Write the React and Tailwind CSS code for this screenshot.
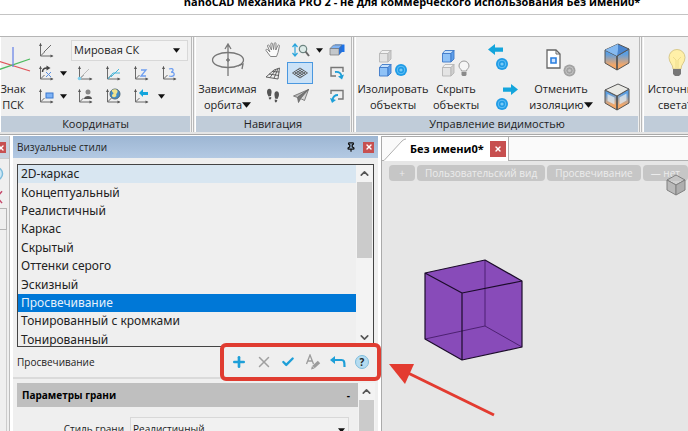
import { useState } from 'react'
import clsx from 'clsx'
import { ChevronUp, ChevronDown, Plus, X, Check, Pin } from 'lucide-react'

const STYLES = [
  '2D-каркас',
  'Концептуальный',
  'Реалистичный',
  'Каркас',
  'Скрытый',
  'Оттенки серого',
  'Эскизный',
  'Просвечивание',
  'Тонированный с кромками',
  'Тонированный',
]

function Caret({ className }) {
  return (
    <svg viewBox="0 0 8 5" className={clsx('h-[5px] w-[7px] shrink-0', className)} fill="#111">
      <path d="M0 0h8L4 5z" />
    </svg>
  )
}

/* Ribbon parts */

function RibbonGroup({ title, className, children }) {
  return (
    <section className={clsx('flex flex-col shrink-0 border-l border-white bg-[#efefef]', className)}>
      <div className="flex h-[79px] items-start">{children}</div>
      <h2 className="h-4 bg-[#c0ccd9] text-center text-[11px] leading-4 text-[#222]">{title}</h2>
    </section>
  )
}

function Divider() {
  return <div className="mx-px w-[3px] shrink-0 border-x border-[#b9b9b9] bg-[#f6f6f6]" />
}

function BigButton({ lines, icon, menu, className }) {
  return (
    <button className={clsx('flex shrink-0 flex-col items-center text-[11px] leading-4 whitespace-nowrap text-[#222]', className)}>
      <span className="flex h-11 items-end pb-1">{icon}</span>
      <span>{lines[0]}</span>
      <span className="flex items-center">
        {lines[1]}
        {menu && <svg viewBox="0 0 10 6" className="h-[6px] w-[9px]" fill="#111"><path d="M0 0h10L5 6z" /></svg>}
      </span>
    </button>
  )
}

function IconButton({ label, className, children }) {
  return (
    <button aria-label={label} className={clsx('flex h-[22px] shrink-0 items-center justify-center', className)}>
      {children}
    </button>
  )
}

function AxisIcon({ children }) {
  return (
    <svg viewBox="0 0 16 16" className="size-4" fill="none">
      <path d="M2.500 1.500V14h12M2.500 14l4-4" stroke="#6b6b6b" />
      <path d="M1 4l1.500-3L4 4zM12.500 12.500l3 1.500-3 1.500z" fill="#555" />
      {children}
    </svg>
  )
}

function UcsIcon() {
  return (
    <svg viewBox="0 0 36 26" className="h-[26px] w-9" fill="none" strokeWidth="1.300">
      <path d="M0 13l35 11" stroke="#e0565b" />
      <path d="M35 12L0 24" stroke="#4cba5e" />
      <path d="M18 0v20" stroke="#6d87e8" />
    </svg>
  )
}

function OrbitIcon() {
  return (
    <svg viewBox="0 0 34 34" className="h-[34px] w-[34px]" fill="none" stroke="#777" strokeWidth="1.300">
      <ellipse cx="17" cy="17" rx="15.500" ry="7.500" />
      <path d="M17 2v31M14 6l3-5 3 5" />
      <path d="M27 23l5-2-1 5M15 17h4M17 15v4" />
    </svg>
  )
}

function HandIcon() {
  return (
    <svg viewBox="0 0 16 16" className="size-4" fill="#fafafa" stroke="#777" strokeWidth=".9" strokeLinejoin="round">
      <path d="M5.500 14.500L1 8.500c-.5-1 .8-1.700 1.500-1L5 10 2.500 4c-.2-1.200 1.300-1.500 1.700-.5L6.500 8 5.800 2c0-1.300 1.600-1.300 1.800 0l1 5.500.7-6c.2-1.200 1.700-1 1.700.2L10.800 8l2-4.500c.5-1 1.900-.5 1.600.6L13 10.500l-1.500 4z" />
    </svg>
  )
}

function ZoomIcon() {
  return (
    <svg viewBox="0 0 18 14" className="h-[14px] w-[18px]" fill="none">
      <path d="M3 2v10M.5 4L3 1l2.500 3M.5 10L3 13l2.500-3" stroke="#2aa5dc" strokeWidth="1.200" />
      <circle cx="11" cy="6" r="3.700" fill="#dcebe8" stroke="#6d8481" strokeWidth="1.200" />
      <path d="M13.500 8.500L17 13" stroke="#666" strokeWidth="2" />
    </svg>
  )
}

function ViewCubeIcon() {
  return (
    <svg viewBox="0 0 16 14" className="h-[14px] w-4">
      <path d="M6 1.500h9.500V9H6z" fill="#1c73e8" />
      <path d="M1 5.500h9V12H1z" fill="#c3c7cb" stroke="#777" strokeWidth=".7" />
      <path d="M1 5.500L4.500 2H13l-3 3.500z" fill="#7fb3f5" stroke="#777" strokeWidth=".7" />
      <path d="M10 5.500L13 2v7l-3 3z" fill="#2a6fd0" />
    </svg>
  )
}

function PerspectiveIcon() {
  return (
    <svg viewBox="0 0 16 14" className="h-[14px] w-4" fill="none" stroke="#555" strokeWidth=".9">
      <path d="M1 11l12 2 1.500-11L9 4zM4 8l10 1.500M7 5.500l7.500.500M5 11.500L11 3.500M9 12.300l4-9.800" />
    </svg>
  )
}

function GridIcon() {
  return (
    <svg viewBox="0 0 16 12" className="h-3 w-4" fill="none" stroke="#555" strokeWidth=".9">
      <path d="M8 1l7.500 5L8 11 .5 6zM6.100 2.300l7.500 5M4.200 3.500l7.500 5M2.400 4.800l7.500 5M9.900 2.300l-7.500 5M11.800 3.500l-7.500 5M13.600 4.800l-7.500 5" />
    </svg>
  )
}

function StepsIcon() {
  return (
    <svg viewBox="0 0 14 16" className="h-4 w-[14px]" fill="#555">
      <path d="M1 4c0-4 4-4 4.500-1 .3 2-.5 3-.5 5L2.500 8.500C2 7 1 6 1 4zM2.700 9.500L5.200 9c.6 3-2.200 3.500-2.500.5z" />
      <path d="M13 6.500c0-4-4-4-4.500-1-.3 2 .5 3 .5 5l2.500.5c.5-1.500 1.500-2.500 1.500-4.500zM11.300 12l-2.500-.5c-.6 3.500 2.200 4 2.500.5z" />
    </svg>
  )
}

function PlaneIcon() {
  return (
    <svg viewBox="0 0 16 14" className="h-[14px] w-4" stroke="#666" strokeWidth=".8" strokeLinejoin="round">
      <path d="M15.500.5L.5 7l4 1.500z" fill="#bbb" />
      <path d="M15.500.5L4.500 8.500l1 5 2-3.500z" fill="#777" />
      <path d="M15.500.5l-8 9 4 2z" fill="#d6d6d6" />
    </svg>
  )
}

function ViewArrowIcon({ flip }) {
  return (
    <svg viewBox="0 0 16 14" className="h-[14px] w-4" fill="none">
      <path d={flip ? 'M2 5V1.500h12V10H9' : 'M7 10H2V1.500h12V6'} stroke="#777" strokeWidth="1.400" />
      <path d={flip ? 'M9 6c-3 0-5 1.500-5.500 5' : 'M6 6c4-.5 6 1.500 6.500 4'} stroke="#1e9fd8" strokeWidth="1.800" />
      <path d={flip ? 'M1 9l2 5 4-3z' : 'M9 10.500l4 3 2-5z'} fill="#1e9fd8" />
    </svg>
  )
}

function SmallCube({ x = 0, y = 0, blue }) {
  const stroke = blue ? '#3c78c8' : '#b5b5b5'
  return (
    <g transform={`translate(${x} ${y})`} stroke={stroke} strokeWidth=".9" strokeLinejoin="round">
      <path d="M.5 3.500h8.500v8.500H.5z" fill={blue ? '#8fc2f7' : '#e4e4e4'} />
      <path d="M.5 3.500L3 .5h9L9 3.500z" fill={blue ? '#c5e0fb' : '#f1f1f1'} />
      <path d="M9 3.500l3-3V9l-3 3z" fill={blue ? '#5e9fea' : '#cfcfcf'} />
    </g>
  )
}

function Dot({ cx, cy, gray }) {
  return (
    <g fill="none">
      <circle cx={cx} cy={cy} r="6" fill={gray ? '#a2a2a2' : '#1e9be6'} />
      <circle cx={cx} cy={cy} r="3.800" stroke={gray ? '#c5c5c5' : '#66c1f5'} />
      <circle cx={cx} cy={cy} r="1.600" fill={gray ? '#c5c5c5' : '#7accf7'} />
    </g>
  )
}

function IsolateIcon() {
  return (
    <svg viewBox="0 0 30 28" className="h-7 w-[30px]">
      <SmallCube x={1} y={1} />
      <SmallCube x={1} y={15} blue />
      <Dot cx={23} cy={21} />
    </svg>
  )
}

function HideIcon() {
  return (
    <svg viewBox="0 0 30 28" className="h-7 w-[30px]">
      <SmallCube x={1} y={1} blue />
      <SmallCube x={1} y={15} />
      <path d="M20.500 22c0-2-2.500-2.500-2.500-5a5 5 0 0 1 10 0c0 2.500-2.500 3-2.500 5z" fill="#f5f5f5" stroke="#999" />
      <path d="M20.500 23h5v3l-1 1h-3l-1-1z" fill="#8a8a8a" />
    </svg>
  )
}

function UndoIsolateIcon() {
  return (
    <svg viewBox="0 0 30 28" className="h-7 w-[30px]">
      <path d="M1 1h9l4 4v14H1z" fill="#fff" stroke="#666" strokeWidth="1.300" />
      <path d="M10 1v4h4" fill="none" stroke="#666" />
      <path d="M5 9h5v5H5z" fill="#cfe4ff" stroke="#2a7fe0" strokeWidth="1.600" />
      <Dot cx={23.500} cy={21.500} gray />
    </svg>
  )
}

function ShiftIcon({ right }) {
  return (
    <svg viewBox="0 0 30 28" className="h-7 w-[30px]">
      <path d={right ? 'M15 4h8V0l7 6.500L23 13V9h-8z' : 'M15 4H7V0L0 6.500 7 13V9h8z'} fill="#14a5dc" transform="translate(0 1) scale(1 .85)" />
      <Dot cx={14} cy={21} />
    </svg>
  )
}

function BoxIcon({ open }) {
  return (
    <svg viewBox="0 0 26 28" className="h-7 w-[26px]" strokeLinejoin="round">
      <defs>
        <linearGradient id={open ? 'boxOpen' : 'boxSolid'} gradientUnits="userSpaceOnUse" x1="0" y1="6" x2="0" y2="26">
          <stop offset=".25" stopColor="#5c9fe2" />
          <stop offset=".8" stopColor="#f3a768" />
        </linearGradient>
      </defs>
      <path d="M1 7l12 6v14L1 20zM25 6L13 13v14l12-7z" fill={open ? 'url(#boxOpen)' : 'url(#boxSolid)'} stroke="#555" />
      <path d="M1 7l13-6 11 5-12 7z" fill={open ? '#e9e9e5' : '#4a86d0'} stroke="#555" />
      {open
        ? <path d="M3.500 11l7 3.500v7l-7-3.500zM22.500 10.500l-7 4v7l7-4z" fill="#dfe7ed" opacity=".8" />
        : <path d="M14 1v6l-1 6L1 7z" fill="#86baf0" />}
      <path d="M13 13v14" stroke="#555" />
    </svg>
  )
}

function BulbIcon() {
  return (
    <svg viewBox="0 0 18 28" className="h-7 w-[18px]">
      <path d="M5 20c0-5-4-6-4-11.500a8 8 0 0 1 16 0C17 14 13 15 13 20z" fill="#fff0a8" stroke="#d9c98a" />
      <path d="M5 8l3 3v8M13 8l-3 3v8" fill="none" stroke="#eedc8c" />
      <path d="M5 20h8v5l-2 2H7l-2-2z" fill="#777" />
    </svg>
  )
}

function Ribbon() {
  return (
    <div className="flex overflow-hidden border-t border-[#b5b5b5] bg-[#efefef]">
      <RibbonGroup title="Координаты" className="w-[190px]">
        <BigButton className="-ml-3 w-12" lines={['Знак', 'ПСК']} icon={<span className="mb-1"><UcsIcon /></span>} />
        <div className="flex flex-col gap-px pt-[2px]">
          <div className="flex items-center">
            <IconButton label="ПСК" className="w-[18px]"><AxisIcon><path d="M6 10l7-7" stroke="#6b6b6b" /></AxisIcon></IconButton>
            <div className="relative ml-4 flex">
              <select aria-label="Система координат" defaultValue="world" className="h-[21px] w-[117px] appearance-none border border-[#d8d8d8] bg-[#f3f3f3] pl-[2px] text-[11px] leading-4 text-[#222]">
                <option value="world">Мировая СК</option>
              </select>
              <Caret className="pointer-events-none absolute right-2 top-2" />
            </div>
          </div>
          <div className="flex items-center">
            <IconButton label="Повернуть" className="w-[18px]">
              <AxisIcon>
                <path d="M4.500 7c0-3 2-4 4.500-4" stroke="#444" strokeWidth="1.500" />
                <path d="M8.500 .5l4 2.500-4 2.500z" fill="#444" />
                <path d="M8 7l5 5M13 7l-5 5" stroke="#5a8fe0" />
              </AxisIcon>
            </IconButton>
            <IconButton label="Меню поворота" className="w-4"><Caret /></IconButton>
            <IconButton label="Начало" className="w-7"><AxisIcon><path d="M5 11l7-7" stroke="#bbb" /><circle cx="2.500" cy="13.500" r="1.800" fill="#7fd0ee" /></AxisIcon></IconButton>
            <IconButton label="Плоскость" className="w-7"><AxisIcon><path d="M3 14l5-6h7M6 12l8-8" stroke="#45b5da" /></AxisIcon></IconButton>
            <IconButton label="Ось Z" className="w-7"><AxisIcon><path d="M8 5h5l-5 6h5" stroke="#6f9ff0" strokeWidth="1.300" /></AxisIcon></IconButton>
            <IconButton label="Три точки" className="w-7"><AxisIcon><path d="M8 4c5-2 5 3 2 3 5 0 4 6-2 4" stroke="#6f9ff0" strokeWidth="1.300" /></AxisIcon></IconButton>
          </div>
          <div className="flex items-center">
            <IconButton label="Вид" className="w-[18px]"><AxisIcon><rect x="8" y="5" width="7" height="5" fill="#7fb3f5" stroke="#3b78cf" /></AxisIcon></IconButton>
            <IconButton label="Меню вида" className="w-4"><Caret /></IconButton>
            <IconButton label="Объект" className="w-7">
              <AxisIcon><path d="M7 11c0-4 8-4 8 0z" fill="#555" /><circle cx="11" cy="4" r="2.500" fill="#888" /></AxisIcon>
            </IconButton>
            <IconButton label="Мировая" className="w-7">
              <AxisIcon>
                <circle cx="10" cy="6" r="5" fill="#3f8cc8" stroke="#536a77" />
                <path d="M7 2c4-2 7 1 5 3s1 3-2 4-4-2-2-3-2-2-1-4z" fill="#efe28d" />
              </AxisIcon>
            </IconButton>
            <IconButton label="Предыдущая" className="w-7"><AxisIcon><path d="M6 5l4-4v3h5v3h-5v2z" fill="#14a5dc" /></AxisIcon></IconButton>
            <IconButton label="Меню истории" className="w-3"><Caret /></IconButton>
          </div>
        </div>
      </RibbonGroup>
      <Divider />
      <RibbonGroup title="Навигация" className="w-[155px]">
        <BigButton className="w-[63px]" lines={['Зависимая', 'орбита']} menu icon={<OrbitIcon />} />
        <div className="flex flex-col gap-px pt-[2px]">
          <div className="flex">
            <IconButton label="Панорама" className="w-7"><HandIcon /></IconButton>
            <IconButton label="Масштаб" className="w-7"><ZoomIcon /></IconButton>
            <IconButton label="Меню масштаба" className="w-2"><Caret /></IconButton>
            <IconButton label="Видовой куб" className="w-7"><ViewCubeIcon /></IconButton>
          </div>
          <div className="flex">
            <IconButton label="Перспектива" className="w-7"><PerspectiveIcon /></IconButton>
            <IconButton label="Параллельная проекция" className="mr-[10px] w-[26px] border border-[#4a98e0] bg-[#cbe2f7]"><GridIcon /></IconButton>
            <IconButton label="Следующий вид" className="w-7"><ViewArrowIcon /></IconButton>
          </div>
          <div className="flex">
            <IconButton label="Обход" className="w-7"><StepsIcon /></IconButton>
            <IconButton label="Облет" className="mr-2 w-7"><PlaneIcon /></IconButton>
            <IconButton label="Предыдущий вид" className="w-7"><ViewArrowIcon flip /></IconButton>
          </div>
        </div>
      </RibbonGroup>
      <Divider />
      <RibbonGroup title="Управление видимостью" className="w-[283px]">
        <BigButton className="w-[74px]" lines={['Изолировать', 'объекты']} icon={<IsolateIcon />} />
        <BigButton className="w-[52px]" lines={['Скрыть', 'объекты']} icon={<HideIcon />} />
        <div className="flex w-[42px] flex-col items-center gap-3 pt-[6px]">
          <button aria-label="Назад"><ShiftIcon /></button>
          <button aria-label="Вперед"><ShiftIcon right /></button>
        </div>
        <BigButton className="w-[74px]" lines={['Отменить', 'изоляцию']} menu icon={<UndoIsolateIcon />} />
        <div className="flex w-[38px] flex-col items-center gap-3 pt-[6px]">
          <button aria-label="Закрытый объем"><BoxIcon /></button>
          <button aria-label="Открытый объем"><BoxIcon open /></button>
        </div>
      </RibbonGroup>
      <Divider />
      <RibbonGroup title="" className="w-[120px]">
        <BigButton className="w-[66px]" lines={['Источники', 'света']} menu icon={<BulbIcon />} />
      </RibbonGroup>
    </div>
  )
}

/* Docked palette */

function CloseButton({ className }) {
  return (
    <button aria-label="Закрыть" className={clsx('flex shrink-0 items-center justify-center bg-[#c75050] text-white', className)}>
      <X size={8} strokeWidth={4} />
    </button>
  )
}

function ScrollBar({ thumb, end }) {
  return (
    <div className="flex w-[17px] shrink-0 flex-col items-center bg-[#f3f3f3] text-[#555]">
      <ChevronUp size={13} strokeWidth={3} className="my-[2px] shrink-0" />
      <div className={clsx('w-[15px] bg-[#cbcbcb]', thumb)} />
      {end && <ChevronDown size={13} strokeWidth={3} className="mt-auto mb-[2px] shrink-0" />}
    </div>
  )
}

function StyleToolbar() {
  return (
    <div className="relative flex items-center">
      <div className="absolute -inset-x-[7px] -top-1 -bottom-1 rounded-md border-4 border-[#e03c31] pointer-events-none" />
      <button aria-label="Создать" className="flex h-[30px] w-6 items-center justify-center"><Plus size={16} strokeWidth={4} color="#1e9fd8" /></button>
      <button aria-label="Удалить" className="flex h-[30px] w-[25px] items-center justify-center"><X size={18} strokeWidth={2} color="#a0a0a0" /></button>
      <button aria-label="Применить" className="flex h-[30px] w-6 items-center justify-center"><Check size={14} strokeWidth={4} color="#1e9fd8" /></button>
      <button aria-label="Переименовать" className="flex h-[30px] w-[25px] items-center justify-center">
        <svg viewBox="0 0 16 16" className="size-4" fill="none" stroke="#9c9c9c">
          <path d="M1.500 10L5 1l3.500 9M3 7h4" strokeWidth="1.300" />
          <path d="M8.500 13l5.500-5" strokeWidth="3.500" />
          <path d="M6 15.500l3.500-1-2.500-2.500z" fill="#9c9c9c" stroke="none" />
        </svg>
      </button>
      <button aria-label="Отменить" className="flex h-[30px] w-[25px] items-center justify-center">
        <svg viewBox="0 0 16 12" className="h-3 w-4" fill="none">
          <path d="M3 4h8.500c2.500 0 3 1 3 7" stroke="#1e9fd8" strokeWidth="2.200" />
          <path d="M5 0v8L0 4z" fill="#1e9fd8" />
        </svg>
      </button>
      <button aria-label="Справка" className="flex h-[30px] w-6 items-center justify-center">
        <span className="flex size-[14px] items-center justify-center rounded-full border border-[#7ebcdc] bg-[#b5dcf1] text-[10px] font-bold text-[#222]">?</span>
      </button>
    </div>
  )
}

function StylesPanel() {
  const [selected, setSelected] = useState('Просвечивание')

  return (
    <section className="flex w-[365px] shrink-0 flex-col bg-[#efefef]">
      <header className="flex h-[22px] shrink-0 items-center bg-linear-to-b from-[#9db6d3] to-[#b3c9e3] px-1 text-[#222]">
        <h2 className="flex-1 text-[10px]">Визуальные стили</h2>
        <button aria-label="Закрепить" className="mr-[7px]"><Pin size={10} strokeWidth={3} fill="#8fa8c5" color="#111" /></button>
        <CloseButton className="size-[11px]" />
      </header>
      <div className="mx-1 mt-[6px] flex h-[183px] shrink-0 overflow-hidden border border-[#444]">
        <ul className="grid h-[184px] flex-1 font-['Noto_Sans',sans-serif]">
          {STYLES.map((s, i) => (
            <li key={s} className="flex">
              <button
                onClick={() => setSelected(s)}
                className={clsx(
                  'w-full pl-[3px] text-left text-[12px] leading-[18px]',
                  s === selected ? 'bg-[#0078d7] text-[#e6f1fb]' : 'text-[#222]',
                  i === 0 && s !== selected && 'bg-[#d8e6f1]',
                )}
              >
                {s}
              </button>
            </li>
          ))}
        </ul>
        <ScrollBar thumb="h-[76px]" end />
      </div>
      <div className="flex shrink-0 items-center justify-between border-b-2 border-[#dadada] pr-1 pl-1 text-[10px] text-[#222]">
        <span>{selected}</span>
        <StyleToolbar />
      </div>
      <div className="mt-1 ml-1 mr-[3px] flex min-h-0 flex-1 overflow-hidden">
        <div className="flex-1">
          <button className="flex h-6 w-full items-center justify-between bg-[#bfbfbf] pr-2 pl-[5px] text-[10px] font-bold text-black">
            <span>Параметры грани</span>
            <span>-</span>
          </button>
          <div className="mt-[10px] flex items-center pr-[9px] text-[10px] text-[#222]">
            <label htmlFor="face" className="w-[113px] pr-[6px] text-right">Стиль грани</label>
            <div className="relative flex flex-1">
              <select id="face" defaultValue="real" className="h-[25px] w-full appearance-none border border-[#d8d8d8] bg-[#f1f1f1] pl-[2px] text-[10px]">
                <option value="real">Реалистичный</option>
              </select>
              <Caret className="pointer-events-none absolute right-1 top-[11px]" />
            </div>
          </div>
        </div>
        <ScrollBar thumb="flex-1" />
      </div>
    </section>
  )
}

function LeftStrip() {
  return (
    <aside className="flex w-[10px] shrink-0 flex-col overflow-hidden border-r border-[#bdbdbd] bg-[#efefef]">
      <div className="h-[22px] bg-[#c9d3df] pt-[6px]"><CloseButton className="-ml-[5px] size-[11px]" /></div>
      <svg viewBox="0 0 9 50" className="h-[50px] w-[9px] shrink-0 border-t border-[#ccc]" fill="none">
        <circle cx="-4" cy="15" r="6.500" fill="#cde8f6" stroke="#7cbbdc" strokeWidth="1.500" />
        <path d="M-9 32L2 45M2 33l-11 12" stroke="#c5466a" strokeWidth="1.500" />
      </svg>
      <div className="mr-[2px] h-[22px] shrink-0 border-y border-r border-[#b5b5b5]" />
      <div className="mr-[2px] flex-1 border-r border-[#ccc]" />
    </aside>
  )
}

/* Drawing area */

function Viewport() {
  return (
    <main className="flex min-w-0 flex-1 flex-col border-t border-l border-[#aaa] bg-[#e6e6e6]">
      <div className="flex h-6 shrink-0 bg-[#fafafa]">
        <svg viewBox="0 0 24 24" className="size-6 shrink-0" fill="#fff">
          <path d="M2 24L20 4q2-2 4-2v22z" />
          <path d="M0 23.500h2L20 4q2-2 4-2" fill="none" stroke="#b0b0b0" />
        </svg>
        <div className="flex items-center gap-[6px] border-r border-[#b0b0b0] bg-white pr-[2px] pl-1">
          <button className="text-[11px] font-bold text-black">Без имени0*</button>
          <CloseButton className="size-4" />
        </div>
        <div className="flex-1 border-b border-[#b0b0b0]" />
      </div>
      <div className="relative flex-1 overflow-hidden">
        <div className="flex gap-[2px] pt-1 pl-[7px] text-[10px] leading-4 whitespace-nowrap text-[#ececec]">
          <button className="w-[26px] shrink-0 rounded-sm bg-[#c6c6c6]">+</button>
          <button className="shrink-0 rounded-sm bg-[#c6c6c6] px-2">Пользовательский вид</button>
          <button className="shrink-0 rounded-sm bg-[#c6c6c6] px-2">Просвечивание</button>
          <button className="shrink-0 rounded-sm bg-[#c6c6c6] px-2">— нет</button>
        </div>
        <svg className="absolute inset-0 h-full w-full" fill="none">
          <g strokeLinejoin="round" stroke="#777" opacity=".9">
            <path d="M285 19l9-5 9 5-9 5z" fill="#c4c4c4" fillOpacity=".7" />
            <path d="M285 19l9 5v10l-9-5z" fill="#b5b5b5" />
            <path d="M303 19l-9 5v10l9-5z" fill="#a8a8a8" />
          </g>
          <g strokeLinejoin="round">
            <path d="M43 112l60-13 37 21v66l-60 13-37-21z" fill="#884bb9" />
            <path d="M103 99v66M43 178l60-13 37 21" stroke="#4d2172" />
            <path d="M43 112l60-13 37 21v66l-60 13-37-21zM43 112l37 20 60-12M80 132v67" stroke="#1c0c2b" strokeWidth="1.200" />
          </g>
          <path d="M24 211L112 254" stroke="#e33b30" strokeWidth="3" />
          <path d="M7 203h25l-9 20z" fill="#e33b30" />
        </svg>
      </div>
    </main>
  )
}

export default function App() {
  return (
    <div className="flex h-screen flex-col overflow-hidden bg-white font-['Open_Sans','Noto_Sans',sans-serif]">
      <header className="flex h-[15px] shrink-0 items-end justify-center overflow-hidden border-b border-[#c4c4c4] pb-1 pl-[136px]">
        <h1 className="text-[11px] leading-4 font-bold whitespace-nowrap text-black">
          nanoCAD Механика PRO 2 - не для коммерческого использования Без имени0*
        </h1>
      </header>
      <div className="h-[21px] shrink-0" />
      <div className="shrink-0 border-b border-[#a9a9a9] bg-[#e5e5e5] pb-[2px]"><Ribbon /></div>
      <div className="flex min-h-0 flex-1 gap-[3px] pt-px">
        <LeftStrip />
        <StylesPanel />
        <Viewport />
      </div>
    </div>
  )
}
